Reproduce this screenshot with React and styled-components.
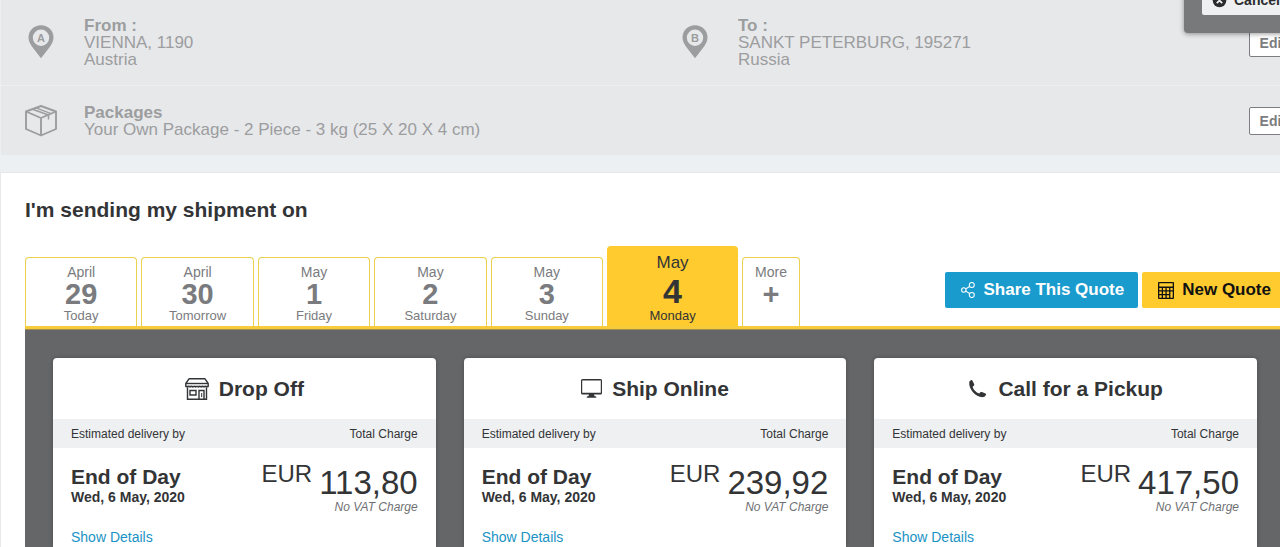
import React, { useState } from 'react'
import styled, { createGlobalStyle } from 'styled-components';

const days = [
  { month: 'April', day: '29', name: 'Today' },
  { month: 'April', day: '30', name: 'Tomorrow' },
  { month: 'May', day: '1', name: 'Friday' },
  { month: 'May', day: '2', name: 'Saturday' },
  { month: 'May', day: '3', name: 'Sunday' },
  { month: 'May', day: '4', name: 'Monday' },
]

function Pin({ letter }) {
  return (
    <svg width="26" height="35" viewBox="0 0 26 35" aria-hidden="true">
      <path fillRule="evenodd" fill="#9c9d9f" d="M13 .2C6 .2.5 5.500.5 12.300c0 3.600 1.500 6.400 3.400 9.200L13 33.300l9.100-11.800c1.900-2.800 3.400-5.600 3.400-9.200C25.500 5.500 20 .2 13 .2zM13 4.600a8.200 8.200 0 1 1 0 16.400 8.200 8.200 0 0 1 0-16.400z" />
      <text x="13" y="16.600" textAnchor="middle" fontFamily="Liberation Sans, Arial, sans-serif" fontWeight="bold" fontSize="11" fill="#9c9d9f">{letter}</text>
    </svg>
  )
}

function BoxIcon() {
  return (
    <svg width="32" height="32" viewBox="0 0 32 32" fill="none" stroke="#9c9d9f" strokeWidth="1.900" strokeLinejoin="round" aria-hidden="true">
      <path d="M16 1L31 6.500V24L16 30.500 1 24V6.500z" />
      <path d="M1 6.500L16 13l15-6.500M16 13v17.500" />
      <path d="M7.500 4.200L23.500 10v4.500M11 2.900L26 8.600" strokeWidth="1.500" />
    </svg>
  )
}

function StoreIcon() {
  return (
    <svg width="24" height="22" viewBox="0 0 24 22" fill="none" stroke="#333436" strokeWidth="1.400" aria-hidden="true">
      <path d="M4 .8h16l3.200 4.700v3H.8v-3z" strokeLinejoin="round" />
      <path d="M1 5.500h22" />
      <path d="M.8 8.200q1.400 2 2.800 0 1.400 2 2.800 0 1.400 2 2.800 0 1.400 2 2.800 0 1.400 2 2.800 0 1.400 2 2.800 0 1.400 2 2.800 0 1.400 2 2.800 0" strokeWidth="1" />
      <path d="M2.500 9.500v11.700h19V9.500M5 12.500h6v4.500H5zM14 21v-8.500h5V21" />
      <path d="M16.700 15v4" strokeWidth="1" />
    </svg>
  )
}

function MonitorIcon() {
  return (
    <svg width="21" height="19" viewBox="0 0 21 19" aria-hidden="true">
      <path fillRule="evenodd" fill="#333436" d="M1.500 0h18A1.500 1.500 0 0 1 21 1.500v12.500a1.500 1.500 0 0 1-1.500 1.500h-18A1.500 1.500 0 0 1 0 14V1.500A1.500 1.500 0 0 1 1.500 0zM1.200 1.500v12.200h18.600V1.500zM8 15.500h5l.5 1.600 1.800.7v.9H5.700v-.9l1.800-.7z" />
    </svg>
  )
}

function PhoneIcon() {
  return (
    <svg width="20" height="20" viewBox="0 0 20 20" aria-hidden="true">
      <path fill="#333436" d="M1.300 3.100C1.500 2.200 2.600 1.200 3.500 1.100c.5 0 .8.200 1 .7L6.200 5.300c.3.600.1 1.100-.4 1.500L4.600 7.700c.7 2.900 3.400 5.800 6.600 6.800l1.200-1.200c.4-.4.900-.5 1.500-.3l3.500 1.400c.6.2.8.6.7 1.100-.3 1.200-1.500 2.300-2.800 2.600C8.500 19 .2 10.500 1.300 3.100z" />
    </svg>
  )
}

function CancelIcon() {
  return (
    <svg width="15" height="15" viewBox="0 0 15 15" aria-hidden="true">
      <circle cx="7.500" cy="7.500" r="6.800" fill="#2b2c2e" />
      <path d="M4.800 4.800l5.400 5.400M10.200 4.800l-5.400 5.400" stroke="#eef0f2" strokeWidth="1.800" />
    </svg>
  )
}

function ShareIcon() {
  return (
    <svg width="14" height="16" viewBox="0 0 14 16" fill="none" stroke="#fff" strokeWidth="1.100" aria-hidden="true">
      <circle cx="2.800" cy="8" r="2.200" />
      <circle cx="10.800" cy="3" r="2.500" />
      <circle cx="10.800" cy="13" r="2.500" />
      <path d="M4.800 6.900l3.800-2.400M4.800 9.100l3.800 2.400" />
    </svg>
  )
}

function CalculatorIcon() {
  return (
    <svg width="16" height="17" viewBox="0 0 16 17" aria-hidden="true">
      <path fill="#111" d="M1 0h14a1 1 0 0 1 1 1v15a1 1 0 0 1-1 1H1a1 1 0 0 1-1-1V1a1 1 0 0 1 1-1z" />
      <path fill="#ffcb2f" d="M1.300 1.300h13.400v3.200H1.300zM1.300 6h2.400v2.200H1.300zM5 6h2.400v2.200H5zM8.700 6h2.400v2.200H8.700zM12.400 6h2.300v2.200h-2.300zM1.300 9.500h2.400v2.400H1.300zM5 9.500h2.400v2.400H5zM8.700 9.500h2.400v2.400H8.700zM12.400 9.500h2.300v6.200h-2.300zM1.300 13.200h2.400v2.500H1.300zM5 13.200h2.400v2.500H5zM8.700 13.200h2.400v2.500H8.700z" />
    </svg>
  )
}

const services = [
  { title: 'Drop Off', icon: <StoreIcon />, price: '113,80' },
  { title: 'Ship Online', icon: <MonitorIcon />, price: '239,92' },
  { title: 'Call for a Pickup', icon: <PhoneIcon />, price: '417,50' },
]

function App() {
  const [active, setActive] = useState(5)

  return (
    <Page>
      <Global />
      <Wide>
        <SummaryRow $size={85}>
          <Cell>
            <IconBox><Pin letter="A" /></IconBox>
            <Info><b>From :</b><br />VIENNA, 1190<br />Austria</Info>
          </Cell>
          <Cell>
            <IconBox><Pin letter="B" /></IconBox>
            <Info><b>To :</b><br />SANKT PETERBURG, 195271<br />Russia</Info>
            <EditButton type="button">Edit</EditButton>
          </Cell>
        </SummaryRow>
        <SummaryRow $size={69}>
          <Cell>
            <IconBox><BoxIcon /></IconBox>
            <Info><b>Packages</b><br />Your Own Package - 2 Piece - 3 kg (25 X 20 X 4 cm)</Info>
            <EditButton type="button">Edit</EditButton>
          </Cell>
        </SummaryRow>

        <Panel>
          <h1>I'm sending my shipment on</h1>
          <Bar>
            <Tabs>
              {days.map((d, i) => (
                <Tab key={d.name} type="button" $active={i === active} onClick={() => setActive(i)}>
                  <Month $active={i === active}>{d.month}</Month>
                  <Day $active={i === active}>{d.day}</Day>
                  <Weekday>{d.name}</Weekday>
                </Tab>
              ))}
              <Tab type="button" $more>
                <Month>More</Month>
                <Day>+</Day>
                <Weekday />
              </Tab>
            </Tabs>
            <Actions>
              <ActionButton type="button" $bg="#1a9bcd" $color="#fff"><ShareIcon />Share This Quote</ActionButton>
              <ActionButton type="button" $bg="#ffcb2f" $color="#111"><CalculatorIcon />New Quote</ActionButton>
            </Actions>
          </Bar>
          <Stage>
            {services.map((s) => (
              <Card key={s.title}>
                <CardHead>{s.icon}<h2>{s.title}</h2></CardHead>
                <Strip><span>Estimated delivery by</span><span>Total Charge</span></Strip>
                <CardBody>
                  <Offer>
                    <Delivery>
                      <h3>End of Day</h3>
                      <p>Wed, 6 May, 2020</p>
                    </Delivery>
                    <div>
                      <Price><Currency>EUR</Currency><Amount>{s.price}</Amount></Price>
                      <Vat>No VAT Charge</Vat>
                    </div>
                  </Offer>
                  <Details href="#details">Show Details</Details>
                </CardBody>
              </Card>
            ))}
          </Stage>
        </Panel>
      </Wide>

      <Popup>
        <CancelButton type="button"><CancelIcon />Cancel</CancelButton>
      </Popup>
    </Page>
  )
}

const Global = createGlobalStyle`
  *{
    box-sizing: border-box;
  }
  body{
    margin: 0;
    background: #edf0f2;
    color: #333436;
    font-family: "Liberation Sans", Arial, sans-serif;
  }
  button{
    font-family: inherit;
    cursor: pointer;
  }
  h1, h2, h3, p{
    margin: 0;
  }
  svg{
    flex: none;
    display: block;
  }
`

const Page = styled.div`
  position: relative;
  display: flex;
  min-height: 100vh;
  overflow: clip;
`

// the content runs a little past the right edge of the window
const Wide = styled.main`
  display: flex;
  flex-direction: column;
  flex: none;
  width: calc(100% + 28px);
  margin-left: 1px;
`

const SummaryRow = styled.section`
  display: flex;
  min-height: ${(p) => p.$size}px;
  background: #e7e8ea;
  & + &{
    margin-top: 1px;
  }
`

const Cell = styled.div`
  display: flex;
  align-items: center;
  flex: 1;
  gap: 27px;
  padding: 0 12px 0 24px;
`

const IconBox = styled.div`
  display: flex;
  justify-content: center;
  width: 32px;
`

const Info = styled.p`
  flex: 1;
  color: #9c9d9f;
  font-size: 17px;
  line-height: 17px;
`

const EditButton = styled.button`
  height: 28px;
  padding: 0 10px;
  border: 1px solid #7c7d80;
  border-radius: 2px;
  background: #fff;
  color: #7c7d80;
  font-size: 14px;
  font-weight: bold;
`

const Panel = styled.section`
  display: flex;
  flex-direction: column;
  flex: 1;
  margin-top: 18px;
  padding: 25px 24px 0;
  background: #fff;
  box-shadow: 0 0 0 1px #e6e8ea;
  h1{
    margin-bottom: 24px;
    font-size: 21px;
    line-height: 24px;
  }
`

const Bar = styled.div`
  display: flex;
  align-items: flex-end;
  justify-content: space-between;
`

const Tabs = styled.div`
  display: flex;
  align-items: flex-end;
  gap: 4px;
  width: 775px;
`

const Tab = styled.button`
  display: flex;
  flex-direction: column;
  align-items: center;
  flex: ${(p) => (p.$active ? '0 0 131px' : p.$more ? '0 0 58px' : '1 1 0')};
  padding: 6px 0 3px;
  border: 1px solid ${(p) => (p.$active ? '#ffcb2f' : '#ecd04f')};
  border-bottom: 0;
  border-radius: 4px 4px 0 0;
  background: ${(p) => (p.$active ? '#ffcb2f' : '#fff')};
  color: ${(p) => (p.$active ? '#333436' : '#7a7b7e')};
`

const Month = styled.span`
  font-size: ${(p) => (p.$active ? 17 : 14)}px;
  line-height: ${(p) => (p.$active ? 20 : 16)}px;
`

const Day = styled.span`
  font-size: ${(p) => (p.$active ? 34 : 29)}px;
  line-height: ${(p) => (p.$active ? 36 : 29)}px;
  font-weight: bold;
`

const Weekday = styled.span`
  height: 14px;
  font-size: 13px;
  line-height: 14px;
`

const Actions = styled.div`
  display: flex;
  gap: 4px;
  margin-bottom: 18px;
`

const ActionButton = styled.button`
  display: flex;
  align-items: center;
  gap: 8px;
  height: 36px;
  padding: 0 14px 0 16px;
  border: 0;
  border-radius: 2px;
  background: ${(p) => p.$bg};
  color: ${(p) => p.$color};
  font-size: 17px;
  font-weight: bold;
  white-space: nowrap;
`

const Stage = styled.div`
  display: grid;
  grid-template-columns: repeat(3, 1fr);
  gap: 28px;
  flex: 1;
  padding: 29px 28px 0;
  border-top: 3px solid #f6cb3c;
  background: #656668;
  box-shadow: inset 0 1px 0 #a08b4c;
`

const Card = styled.article`
  border-radius: 4px 4px 0 0;
  background: #fff;
  box-shadow: 0 0 4px rgba(0, 0, 0, 0.25);
`

const CardHead = styled.header`
  display: flex;
  align-items: center;
  justify-content: center;
  gap: 10px;
  height: 61px;
  h2{
    font-size: 21px;
    line-height: 24px;
  }
`

const Strip = styled.div`
  display: flex;
  align-items: center;
  justify-content: space-between;
  height: 29px;
  padding: 0 18px;
  background: #eef0f2;
  font-size: 12px;
`

const CardBody = styled.div`
  padding: 14px 18px 2px;
`

const Offer = styled.div`
  display: flex;
  justify-content: space-between;
  margin-bottom: 15px;
`

const Delivery = styled.div`
  padding-top: 3px;
  h3{
    font-size: 21px;
    line-height: 24px;
  }
  p{
    font-size: 14px;
    line-height: 16px;
    font-weight: bold;
  }
`

const Price = styled.div`
  display: flex;
  justify-content: flex-end;
  gap: 7px;
`

const Currency = styled.span`
  font-size: 24px;
  line-height: 24px;
`

const Amount = styled.span`
  padding-top: 4px;
  font-size: 33px;
  line-height: 34px;
`

const Vat = styled.p`
  color: #6f7073;
  font-size: 12px;
  line-height: 14px;
  font-style: italic;
  text-align: right;
`

const Details = styled.a`
  display: block;
  color: #1a93c4;
  font-size: 14px;
  line-height: 16px;
  text-decoration: none;
`

const Popup = styled.div`
  position: absolute;
  top: -31px;
  right: -60px;
  width: 156px;
  padding: 18px;
  border-radius: 4px;
  background: #77797a;
  box-shadow: 0 1px 5px rgba(0, 0, 0, 0.4);
`

const CancelButton = styled.button`
  display: flex;
  align-items: center;
  gap: 7px;
  width: 100%;
  height: 28px;
  padding: 0 10px 2px;
  border: 0;
  border-radius: 2px;
  background: #eef0f2;
  color: #2b2c2e;
  font-size: 14px;
  font-weight: bold;
`

export default App
